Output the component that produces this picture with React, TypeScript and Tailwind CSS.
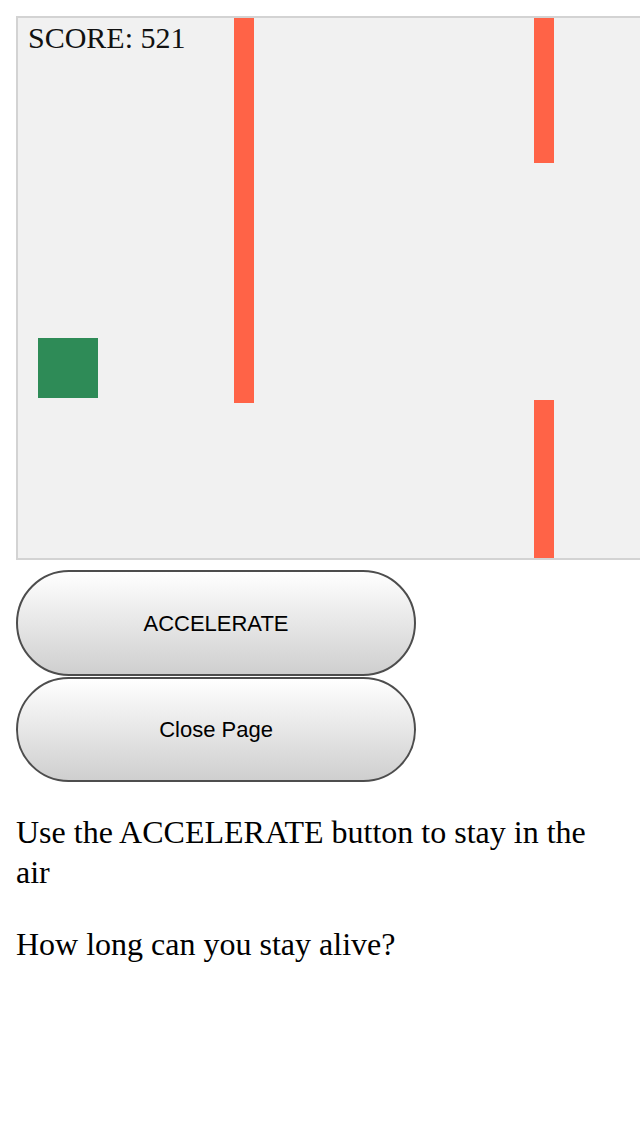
import React from "react";

export default function App() {
  return (
    <div className="w-full min-h-[1136px] bg-white overflow-hidden p-4 font-['Liberation_Serif',serif] text-black">
      <div className="relative w-[964px] h-[544px] border-2 border-[#d3d3d3] bg-[#f1f1f1]">
        <div className="absolute left-[10px] top-[5px] text-[30px] leading-[30px] text-[#111] whitespace-nowrap">
          SCORE: 521
        </div>
        <div className="absolute left-[216px] top-0 w-[20px] h-[385px] bg-[#ff6347]" />
        <div className="absolute left-[516px] top-0 w-[20px] h-[145px] bg-[#ff6347]" />
        <div className="absolute left-[516px] top-[382px] w-[20px] h-[158px] bg-[#ff6347]" />
        <div className="absolute left-[20px] top-[320px] w-[60px] h-[60px] bg-[#2e8b57]" />
      </div>
      <div className="mt-[10px] flex flex-col gap-px">
        <button className="block w-[400px] h-[106px] rounded-full border-2 border-[#4d4d4d] bg-gradient-to-b from-white to-[#cfcfcf] font-['Liberation_Sans',sans-serif] text-[22px] text-black">
          ACCELERATE
        </button>
        <button className="block w-[400px] h-[105px] rounded-full border-2 border-[#4d4d4d] bg-gradient-to-b from-white to-[#cfcfcf] font-['Liberation_Sans',sans-serif] text-[22px] text-black">
          Close Page
        </button>
      </div>
      <p className="mt-[30px] text-[32px] leading-[40px]">
        Use the ACCELERATE button to stay in the air
      </p>
      <p className="mt-8 text-[32px] leading-[40px]">How long can you stay alive?</p>
    </div>
  );
}
